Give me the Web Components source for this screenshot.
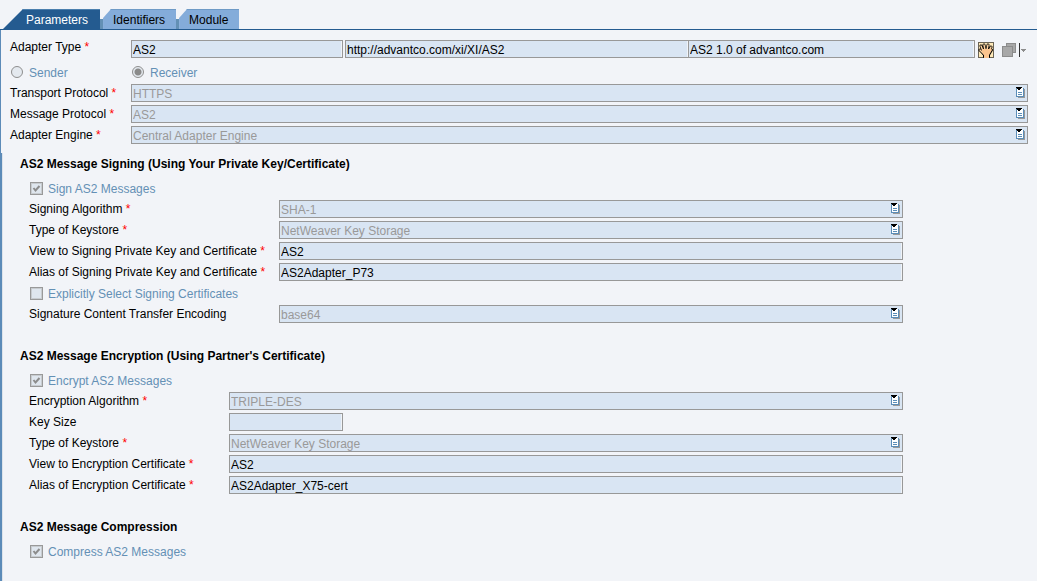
<!DOCTYPE html>
<html lang="en">
<head>
<meta charset="utf-8">
<title>Communication Channel</title>
<style>
  body {
    margin: 0;
    background: #f2f4f8;
    color: #000;
    font: 12px/15px "Liberation Sans", Arial, sans-serif;
  }
</style>
</head>
<body>
<channel-editor></channel-editor>

<script>
const define = (name, html, setup) => customElements.define(name, class extends HTMLElement {
  connectedCallback() {
    if (this.shadowRoot) return;
    const t = document.createElement('template');
    t.innerHTML = html;
    const root = this.attachShadow({ mode: 'open' });
    root.append(t.content.cloneNode(true));
    if (setup) setup(this, root);
  }
});

/* Box look shared by text boxes and drop-downs */
const fieldCss = `
  input, select {
    appearance: none; box-sizing: border-box; width: 100%; min-width: 0; height: 18px; margin: 0;
    padding: 1px 1px 0; border: 1px solid #989898; border-radius: 0;
    background: #d9e5f3; color: #000; font: inherit; line-height: 15px; outline: none;
    box-shadow: inset -1px 0 #f0f3f8;
  }
  select { padding-top: 2px; color: #999; opacity: 1; box-shadow: none; }
`;

define('tab-item', `
  <style>
    :host { display: flex; }
    button {
      display: block; height: 20px; margin: 0; padding: 1px 11px 0 10px; border: 0;
      background: #84acda; color: #000; font: inherit; line-height: 19px; border-top: 1px solid #6e9ac6;
      clip-path: polygon(0 9px, 8px 0, 100% 0, 100% 100%, 0 100%);
    }
    :host([selected]) button {
      padding: 1px 12px 0 26px; background: #245b90; color: #fff; border-color: #4b7fae;
      clip-path: polygon(23px 0, 100% 0, 100% 100%, 3px 100%);
    }
    i { display: block; width: 3px; height: 10px; margin-top: 10px; background: #6390b5; }
    :host([selected]) i { display: none; }
  </style>
  <i></i><button type="button" role="tab"><slot></slot></button>
`, (el, root) => root.querySelector('button').setAttribute('aria-selected', el.hasAttribute('selected')));

define('tab-strip', `
  <style>
    :host { display: flex; padding-top: 9px; border-bottom: 1px solid #245b90; }
  </style>
  <slot></slot>
`);

define('form-row', `
  <style>
    :host { display: grid; grid-template-columns: var(--label-width) minmax(0, 1fr); height: 18px; }
    label { line-height: 18px; white-space: nowrap; }
    b { color: #f00; font-weight: normal; }
    .box { display: grid; }
    .box > * { grid-area: 1 / 1; }
    .box svg { justify-self: end; margin: 3px; pointer-events: none; }
    :host([short]) .box { width: 114px; }
    ${fieldCss}
  </style>
  <label for="f"></label><div class="box"></div>
`, (el, root) => {
  const label = root.querySelector('label'), box = root.querySelector('.box');
  label.textContent = el.getAttribute('label');
  if (el.hasAttribute('required')) label.insertAdjacentHTML('beforeend', ' <b>*</b>');
  const value = el.getAttribute('value') || '';
  if (el.hasAttribute('choice')) {
    box.innerHTML = `<select id="f" disabled><option>${value}</option></select>
      <svg width="9" height="11" shape-rendering="crispEdges">
        <path fill="#999" d="M2 2h7v9H2z"/><path fill="#5a8db8" d="M0 1h8v9H0z"/>
        <path fill="#fff" d="M1 1h6v8H1z"/><path fill="#5a8db8" d="M2 5h4v1H2zM2 7h4v1H2z"/>
        <path d="M0 0h6v1H0zM1 1h4v1H1zM2 2h2v1H2z"/>
      </svg>`;
  } else {
    box.innerHTML = `<input id="f" type="text" readonly value="${value}">`;
  }
});

define('check-row', `
  <style>
    :host { display: flex; height: 18px; padding-left: 1px; color: #6490b5; }
    label { display: flex; align-items: flex-start; gap: 5px; padding-top: 3px; line-height: 15px; }
    input {
      appearance: none; display: block; box-sizing: border-box; width: 13px; height: 13px; margin: 0;
      border: 1px solid #999; background: #dfe6ee; box-shadow: inset 0 0 0 1px #c8ccd0;
    }
    .mark { display: grid; }
    .mark > * { grid-area: 1 / 1; }
    svg { display: none; pointer-events: none; }
    input:checked + svg { display: block; }
  </style>
  <label><span class="mark"><input type="checkbox" disabled><svg width="13" height="13"><path d="M3.5 6l2 2.500 4-4.500" fill="none" stroke="#8c8c8c" stroke-width="2"/></svg></span><slot></slot></label>
`, (el, root) => { root.querySelector('input').checked = el.hasAttribute('checked'); });

define('direction-choice', `
  <style>
    :host { display: grid; grid-template-columns: var(--label-width) minmax(0, 1fr); height: 23px; color: #6490b5; }
    label { display: flex; align-items: flex-start; gap: 6px; padding: 8px 0 0 1px; line-height: 15px; }
    input {
      appearance: none; box-sizing: border-box; width: 12px; height: 12px; margin: 0;
      border: 1px solid #8e8e8e; border-radius: 50%; background: #e4e9ef;
    }
    input:checked { background: radial-gradient(#8a8a8a 0 3px, #e4e9ef 4px); }
  </style>
  <label><input type="radio" name="direction" disabled>Sender</label>
  <label><input type="radio" name="direction" disabled checked>Receiver</label>
`);

define('adapter-type', `
  <style>
    :host { display: grid; grid-template-columns: var(--label-width) minmax(0, 1fr) auto; height: 18px; }
    label { line-height: 14px; }
    b { color: #f00; font-weight: normal; }
    .fields { display: grid; grid-template-columns: 214fr 343fr 287fr; }
    .tools { display: flex; padding-left: 3px; gap: 8px; }
    button { display: block; margin: 0; padding: 1px 0 0; border: 0; background: none; height: 18px; }
    svg { display: block; }
    ${fieldCss}
    .fields input:nth-child(1) { width: calc(100% - 2px); }
    .fields input:nth-child(2) { width: calc(100% + 1px); }
  </style>
  <label for="name">Adapter Type <b>*</b></label>
  <div class="fields">
    <input id="name" type="text" readonly value="AS2">
    <input type="text" readonly value="http://advantco.com/xi/XI/AS2" aria-label="Namespace">
    <input type="text" readonly value="AS2 1.0 of advantco.com" aria-label="Software component version">
  </div>
  <div class="tools">
    <button type="button" aria-label="Select">
      <svg width="16" height="16"><path fill="#6b6455" d="M0 0h16v16H0z"/><path fill="#ffe9b8" d="M1 1h14v14H1z"/>
        <g fill="none" stroke-linecap="round" stroke-linejoin="round">
          <path d="M5 9L3 4M7 8L6 3M9 8l1-5M11 9l2-4M6 12L2 8" stroke="#000" stroke-width="3"/>
          <path d="M5 8h7l1-1 1 1-3 5v2H6v-2l-2-3z" stroke="#000" stroke-width="2"/>
          <path d="M5 9L3 4M7 8L6 3M9 8l1-5M11 9l2-4M6 12L2 8" stroke="#ffd3a0" stroke-width="1.500"/>
        </g>
        <path fill="#fbc48e" d="M5 7h7l1-1 1 2-3 5v3H6v-3l-2-3z"/></svg>
    </button>
    <button type="button" aria-label="More">
      <svg width="26" height="16" shape-rendering="crispEdges"><path fill="#8c8c8c" d="M4 1h10v10H4z"/><path fill="#a8a8a8" d="M5 2h8v8H5z"/>
        <path fill="#8c8c8c" d="M0 4h11v11H0z"/><path fill="#a8a8a8" d="M1 5h9v9H1z"/>
        <path fill="#333" d="M17 1h1v14h-1z"/><path fill="#8c8c8c" d="M19 7h5v1h-5zM20 8h3v1h-3zM21 9h1v1h-1z"/></svg>
    </button>
  </div>
`);

define('form-section', `
  <style>
    :host { display: block; padding-left: 9px; }
    h2 { margin: 0 0 7px -9px; font-size: 12px; line-height: 15px; font-weight: bold; }
    .rows { display: grid; gap: 3px; }
  </style>
  <h2><slot name="title"></slot></h2>
  <div class="rows"><slot></slot></div>
`);

define('channel-editor', `
  <style>
    :host { display: flex; flex-direction: column; min-height: 100vh; }
    .general { display: grid; row-gap: 3px; padding: 10px 9px 9px; border-left: 1px solid #5c8bb8; --label-width: 121px; }
    .details {
      flex: 1; display: flex; flex-direction: column; gap: 26px; padding: 4px 134px 20px 18px;
      border-left: 2px solid #5c8bb8; box-shadow: inset 1px 0 #dde3ea;
    }
    .signing { --label-width: 250px; }
    .encryption { --label-width: 200px; }
  </style>
  <tab-strip role="tablist">
    <tab-item selected>Parameters</tab-item><tab-item>Identifiers</tab-item><tab-item>Module</tab-item>
  </tab-strip>
  <div class="general">
    <div><adapter-type></adapter-type><direction-choice></direction-choice></div>
    <form-row choice required label="Transport Protocol" value="HTTPS"></form-row>
    <form-row choice required label="Message Protocol" value="AS2"></form-row>
    <form-row choice required label="Adapter Engine" value="Central Adapter Engine"></form-row>
  </div>
  <div class="details">
    <form-section class="signing">
      <span slot="title">AS2 Message Signing (Using Your Private Key/Certificate)</span>
      <check-row checked>Sign AS2 Messages</check-row>
      <form-row choice required label="Signing Algorithm" value="SHA-1"></form-row>
      <form-row choice required label="Type of Keystore" value="NetWeaver Key Storage"></form-row>
      <form-row required label="View to Signing Private Key and Certificate" value="AS2"></form-row>
      <form-row required label="Alias of Signing Private Key and Certificate" value="AS2Adapter_P73"></form-row>
      <check-row>Explicitly Select Signing Certificates</check-row>
      <form-row choice label="Signature Content Transfer Encoding" value="base64"></form-row>
    </form-section>
    <form-section class="encryption">
      <span slot="title">AS2 Message Encryption (Using Partner's Certificate)</span>
      <check-row checked>Encrypt AS2 Messages</check-row>
      <form-row choice required label="Encryption Algorithm" value="TRIPLE-DES"></form-row>
      <form-row short label="Key Size"></form-row>
      <form-row choice required label="Type of Keystore" value="NetWeaver Key Storage"></form-row>
      <form-row required label="View to Encryption Certificate" value="AS2"></form-row>
      <form-row required label="Alias of Encryption Certificate" value="AS2Adapter_X75-cert"></form-row>
    </form-section>
    <form-section>
      <span slot="title">AS2 Message Compression</span>
      <check-row checked>Compress AS2 Messages</check-row>
    </form-section>
  </div>
`);
</script>
</body>
</html>
